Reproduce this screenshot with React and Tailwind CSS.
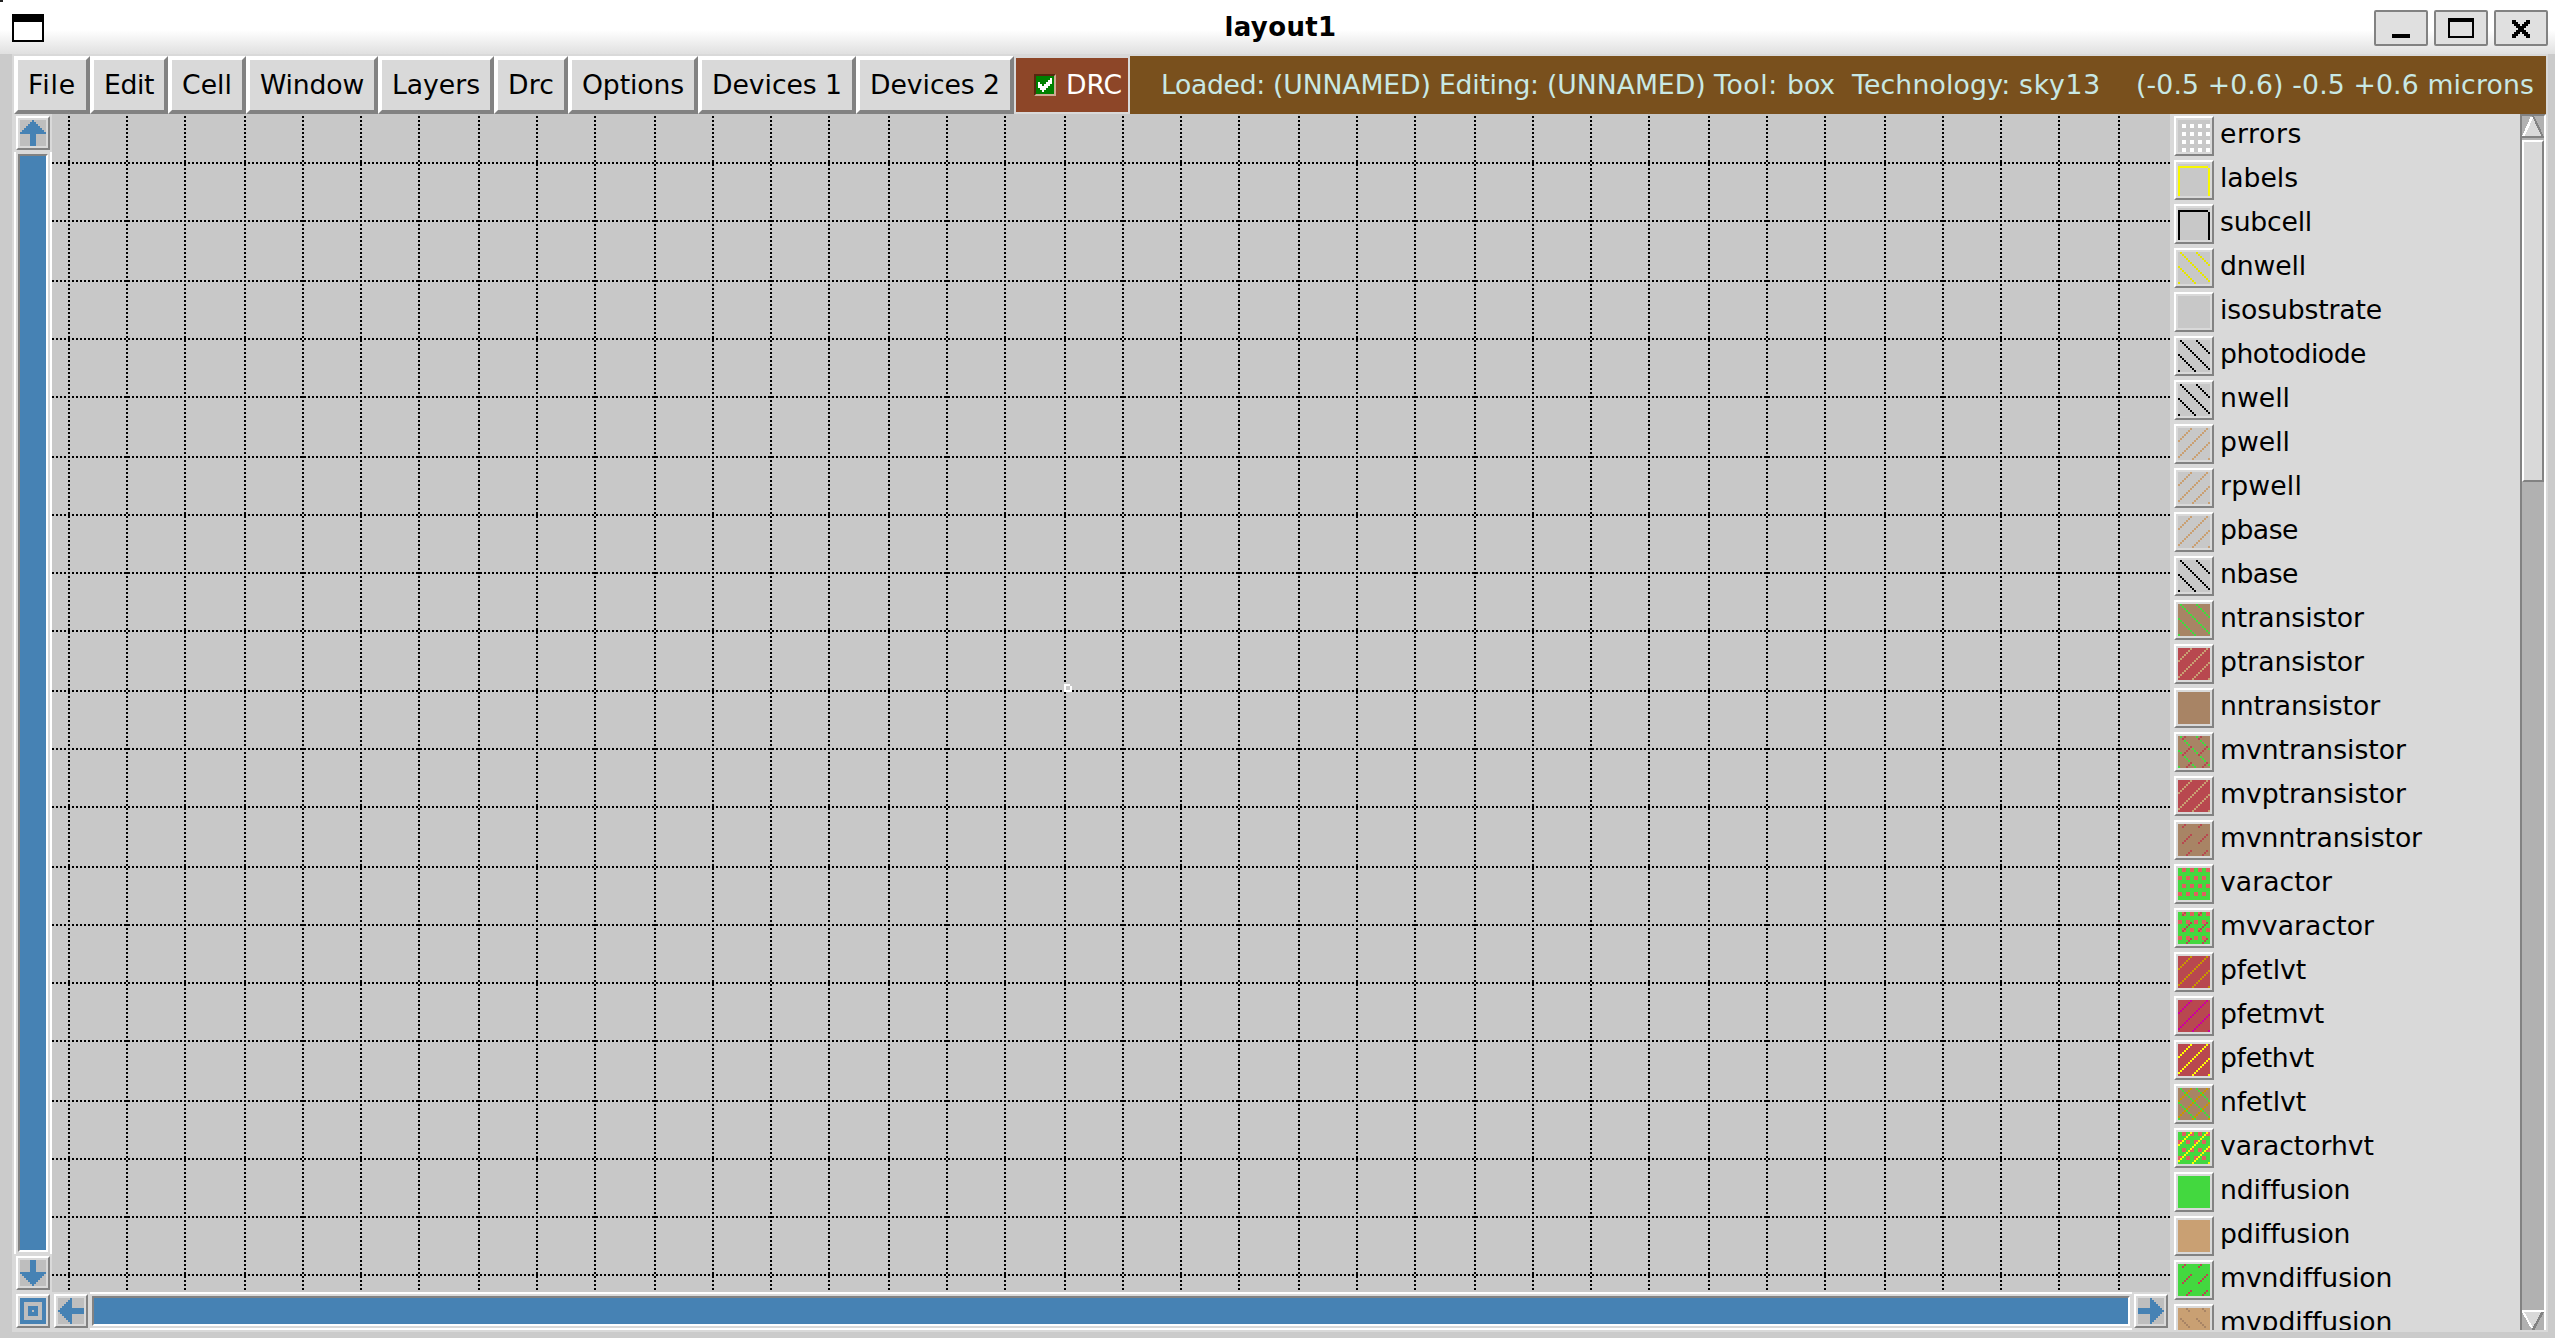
import React, { useLayoutEffect, useRef } from "react";

const FONT = "font-['DejaVu_Sans','Liberation_Sans',sans-serif]";

/* Text set to an exact advance width. */
function Fit({ text, width, className = "" }) {
  const ref = useRef(null);
  useLayoutEffect(() => {
    const el = ref.current;
    el.style.letterSpacing = "0px";
    const natural = el.getBoundingClientRect().width;
    el.style.letterSpacing = (width - natural) / text.length + "px";
  }, [text, width]);
  return (
    <span ref={ref} className={"inline-block whitespace-pre " + className}>
      {text}
    </span>
  );
}

const MENUS = [
  ["File", 76],
  ["Edit", 78],
  ["Cell", 78],
  ["Window", 132],
  ["Layers", 116],
  ["Drc", 74],
  ["Options", 130],
  ["Devices 1", 158],
  ["Devices 2", 158],
];

const STATUS = [
  ["Loaded: ", 112],
  ["(UNNAMED) ", 166],
  ["Editing: ", 108],
  ["(UNNAMED) ", 167],
  ["Tool: ", 73],
  ["box  ", 65],
  ["Technology: ", 167],
  ["sky13", 82],
];

/* Glyph advances of the layer list, in half pixels. */
const ADV = { a: 8, b: 8, c: 7, d: 8, e: 8, f: 5, h: 8, i: 4, l: 4, m: 13, n: 8, o: 8, p: 8, r: 6, s: 7, t: 5, u: 8, v: 8, w: 11, y: 8 };
const advance = (s) => [...s].reduce((n, c) => n + ADV[c] * 2, 0);

const GRAY = "#c8c8c8";
const BROWN = "#a88465";
const RED = "#b8484f";
const GREEN = "#43d83f";
const TAN = "#c9a073";
const GOLD = "#c89600";
const PINK = "#e0605f";

const PATTERNS = {
  dots: (x, y) => x % 4 >= 2 && y % 4 >= 2,
  frame: (x, y) => (y === 1 && x < 15) || (x === 0 && y >= 1) || (x === 15 && y >= 2),
  back: (x, y) => (x - y + 32) % 8 === 1,
  slash: (x, y) => (x + y) % 8 === 6,
  dash: (x, y) => (x + y) % 8 === 3 && x % 8 >= 2 && x % 8 <= 6,
  backDash: (x, y) => (x - y + 32) % 8 === 4 && x % 8 >= 1 && x % 8 <= 5,
  checks: (x, y) => y % 4 < 2 && (y % 8 < 4 ? x % 4 >= 2 : x % 4 < 2),
};

const patternPath = (name) => {
  let d = "";
  for (let y = 0; y < 16; y++)
    for (let x = 0; x < 16; x++) if (PATTERNS[name](x, y)) d += `M${x} ${y}h1v1h-1z`;
  return d;
};

const LAYERS = [
  ["errors", GRAY, ["dots", "#ffffff"]],
  ["labels", GRAY, ["frame", "#f8f800"]],
  ["subcell", GRAY, ["frame", "#000000"]],
  ["dnwell", GRAY, ["back", "#e6e600"]],
  ["isosubstrate", GRAY],
  ["photodiode", GRAY, ["back", "#000000"]],
  ["nwell", GRAY, ["back", "#000000"]],
  ["pwell", GRAY, ["slash", TAN]],
  ["rpwell", GRAY, ["slash", TAN]],
  ["pbase", GRAY, ["slash", TAN]],
  ["nbase", GRAY, ["back", "#000000"]],
  ["ntransistor", BROWN, ["back", GREEN]],
  ["ptransistor", RED, ["slash", TAN]],
  ["nntransistor", BROWN],
  ["mvntransistor", BROWN, ["back", GREEN], ["dash", RED]],
  ["mvptransistor", RED, ["slash", TAN]],
  ["mvnntransistor", BROWN, ["dash", RED]],
  ["varactor", GREEN, ["checks", PINK]],
  ["mvvaractor", GREEN, ["checks", PINK], ["dash", RED]],
  ["pfetlvt", RED, ["slash", GOLD]],
  ["pfetmvt", RED, ["slash", "#cc00a0"]],
  ["pfethvt", RED, ["slash", "#ffff00"]],
  ["nfetlvt", BROWN, ["slash", GOLD], ["back", GREEN]],
  ["varactorhvt", GREEN, ["checks", PINK], ["slash", "#ffff00"]],
  ["ndiffusion", GREEN],
  ["pdiffusion", TAN],
  ["mvndiffusion", GREEN, ["dash", RED]],
  ["mvpdiffusion", TAN, ["backDash", BROWN]],
];

function Swatch({ fill, marks }) {
  return (
    <div className="h-10 w-10 shrink-0 border-2 border-t-white border-l-white border-r-[#828282] border-b-[#828282] bg-[#d9d9d9] p-0.5">
      <svg className="block h-8 w-8" viewBox="0 0 16 16" shapeRendering="crispEdges">
        <rect width="16" height="16" fill={fill} />
        {marks.map(([name, color]) => (
          <path key={name} d={patternPath(name)} fill={color} />
        ))}
      </svg>
    </div>
  );
}

const ARROWS = {
  up: "M6 0h1v1h1v1h1v1h1v1h1v1h1v1h1v1H8v6H5V7H0V6h1V5h1V4h1V3h1V2h1V1h1z",
  down: "M5 0h3v6h5v1h-1v1h-1v1h-1v1h-1v1h-1v1h-1v1H6v-1H5v-1H4v-1H3V9H2V8H1V7H0V6h5z",
  left: "M0 6h1V5h1V4h1V3h1V2h1V1h1V0h1v5h6v3H7v5H6v-1H5v-1H4v-1H3V9H2V8H1V7H0z",
  right: "M13 6h-1V5h-1V4h-1V3H9V2H8V1H7V0H6v5H0v3h6v5h1v-1h1v-1h1v-1h1V9h1V8h1V7h1z",
  zoom: "M0 0h13v13H0zM2 2v9h9V2zM4 4h5v5H4zM6 6v1h1V6z",
};

function ToolButton({ kind }) {
  return (
    <div className="h-[34px] w-[34px] shrink-0 border-2 border-t-white border-l-white border-r-[#828282] border-b-[#828282] bg-[#d9d9d9] p-0.5">
      <svg className="block h-[26px] w-[26px] bg-[#bebebe]" viewBox="0 0 13 13" shapeRendering="crispEdges">
        <path d={ARROWS[kind]} fill="#4682b4" fillRule="evenodd" />
      </svg>
    </div>
  );
}

const COLS = Array.from({ length: 36 }, (_, k) => Math.floor(34.3 + 29.281 * k) - 26 + 0.5);
const ROWS = Array.from({ length: 20 }, (_, k) => Math.floor(81.64 + 29.281 * k) - 57 + 0.5);

function Canvas() {
  return (
    <svg className="block h-[1178px] w-[2118px] bg-[#c8c8c8]" viewBox="0 0 1059 589" shapeRendering="crispEdges">
      <g stroke="#000" strokeWidth="1" strokeDasharray="1 1">
        {COLS.map((x) => (
          <line key={x} x1={x} x2={x} y1="1" y2="588" />
        ))}
        {ROWS.map((y) => (
          <line key={y} x1="0" x2="1059" y1={y} y2={y} />
        ))}
      </g>
      <path d="M506 285h3v1h1v3h-4z" fill="#fff" />
      <rect x="507" y="286" width="2" height="2" fill="#c8c8c8" />
    </svg>
  );
}

function WindowButton({ children }) {
  return (
    <div className="h-9 w-[54px] rounded-[2px] border-2 border-[#828282] bg-[#e0e0e0]">
      <svg className="block h-8 w-[50px]" viewBox="0 0 25 16" shapeRendering="crispEdges">
        {children}
      </svg>
    </div>
  );
}

function TitleBar() {
  return (
    <div className="relative flex h-[54px] justify-between bg-[linear-gradient(to_bottom,#ffffff_30px,#e0e0e0_54px)] pr-[7px] pl-3">
      <div className="absolute top-0 left-0 h-0.5 w-[3px] bg-[#222]" />
      <div className="mt-3.5 h-7 w-8 border-2 border-t-8 border-black bg-white" />
      <div className="absolute inset-x-0 top-0 flex justify-center text-[26px] leading-[54px] font-bold text-black">
        <Fit text="layout1" width={112} className="ml-1.5" />
      </div>
      <div className="mt-2.5 flex gap-1.5">
        <WindowButton>
          <path d="M8 11h9v2H8z" />
        </WindowButton>
        <WindowButton>
          <path fillRule="evenodd" d="M6 3h13v10H6zM7 5v7h11V5z" />
        </WindowButton>
        <WindowButton>
          <path d="M8 4h2v1h1v1h1v1h1V6h1V5h1V4h2v1h0v1h-1v1h-1v1h-1v1h1v1h1v1h1v2h-2v-1h-1v-1h-1v-1h-1v1h-1v1h-1v1H8v-2h1v-1h1V9h1V8h-1V7H9V6H8z" />
        </WindowButton>
      </div>
    </div>
  );
}

function MenuBar() {
  return (
    <div className="flex h-[58px] pr-0.5 pl-0.5 text-[26.67px] leading-[50px] text-black">
      {MENUS.map(([label, w]) => (
        <div
          key={label}
          style={{ width: w }}
          className="shrink-0 border-4 border-t-white border-l-white border-r-[#828282] border-b-[#828282] bg-[#d9d9d9] pl-2.5"
        >
          <Fit text={label} width={w - 28} />
        </div>
      ))}
      <div className="my-0.5 ml-0.5 flex w-28 shrink-0 items-center bg-[#8d4628] pl-[18px] text-white">
        <div className="h-[22px] w-[22px] shrink-0 border-2 border-t-[#56280f] border-l-[#56280f] border-r-[#cdaa94] border-b-[#cdaa94] bg-[#008000]">
          <svg className="block h-[18px] w-[18px]" viewBox="0 0 9 9" shapeRendering="crispEdges">
            <path d="M7 1h1v3H7v1H6v1H5v1H4v1H3V7H2V6H1V3h1v1h1v1h1V4h1V3h1V2h1z" fill="#fff" />
          </svg>
        </div>
        <Fit text="DRC" width={56} className="ml-2.5" />
      </div>
      <div className="ml-0.5 flex flex-1 justify-between bg-[#79501d] pr-3 pl-[31px] leading-[58px] text-[#c8e8e4]">
        <div className="flex">
          {STATUS.map(([text, w], i) => (
            <Fit key={i} text={text} width={w} />
          ))}
        </div>
        <Fit text="(-0.5 +0.6) -0.5 +0.6 microns" width={398} />
      </div>
    </div>
  );
}

function LayerScrollbar() {
  return (
    <div className="flex h-full w-[26px] flex-col border-t-2 border-r-2 border-l-2 border-t-[#828282] border-r-white border-l-[#828282] bg-[#b1b1b1]">
      <svg className="block h-6 w-[22px] shrink-0" viewBox="0 0 22 24" shapeRendering="crispEdges">
        <path d="M11 0L22 22H0z" fill="#d9d9d9" />
        <path d="M10 1L1 21" stroke="#fff" strokeWidth="2.5" />
        <path d="M11 0L21 21M0 21h22" stroke="#828282" strokeWidth="2" />
      </svg>
      <div className="h-[342px] shrink-0 border-2 border-t-white border-l-white border-r-[#828282] border-b-[#828282] bg-[#d9d9d9]" />
      <div className="flex-1" />
      <svg className="block h-5 w-[22px] shrink-0" viewBox="0 0 22 20" shapeRendering="crispEdges">
        <path d="M0 0H22L11 20z" fill="#d9d9d9" />
        <path d="M21 1L11 20" stroke="#828282" strokeWidth="2.5" />
        <path d="M0 1h22M1 2L10 18" stroke="#fff" strokeWidth="2" />
      </svg>
    </div>
  );
}

export default function App() {
  return (
    <div className={"flex h-[1338px] w-[2555px] flex-col overflow-hidden bg-[#cbcbcb] " + FONT}>
      <TitleBar />
      <div className="mr-[7px] ml-3 h-[1278px] bg-[#d9d9d9] pt-0.5">
        <MenuBar />
        <div className="flex h-[1216px]">
          <div className="w-[2158px]">
            <div className="flex h-[1178px]">
              <div className="flex w-10 flex-col pt-0.5 pl-0.5">
                <div className="pl-0.5">
                  <ToolButton kind="up" />
                </div>
                <div className="my-0.5 h-[1102px] w-[38px] border-x-2 border-white p-0.5">
                  <div className="h-[1098px] border-2 border-t-[#828282] border-l-[#828282] border-r-white border-b-white bg-[#4682b4]" />
                </div>
                <div className="pl-0.5">
                  <ToolButton kind="down" />
                </div>
              </div>
              <Canvas />
            </div>
            <div className="flex h-[38px] pl-1">
              <div className="mt-0.5">
                <ToolButton kind="zoom" />
              </div>
              <div className="mt-0.5 ml-1">
                <ToolButton kind="left" />
              </div>
              <div className="mx-0.5 h-[38px] flex-1 border-y-2 border-white p-0.5">
                <div className="h-[30px] border-2 border-t-[#828282] border-l-[#828282] border-r-white border-b-white bg-[#4682b4]" />
              </div>
              <div className="mt-0.5 mr-0.5">
                <ToolButton kind="right" />
              </div>
            </div>
          </div>
          <div className="flex w-[378px] overflow-hidden pl-1">
            <div className="flex h-[1216px] w-[346px] flex-col gap-1 overflow-hidden pt-0.5 text-[26.67px] leading-[36px] text-black">
              {LAYERS.map(([name, fill, ...marks]) => (
                <div key={name} className="flex h-10 shrink-0">
                  <Swatch fill={fill} marks={marks} />
                  <Fit text={name} width={advance(name)} className="ml-1.5" />
                </div>
              ))}
            </div>
            <LayerScrollbar />
          </div>
        </div>
      </div>
    </div>
  );
}
